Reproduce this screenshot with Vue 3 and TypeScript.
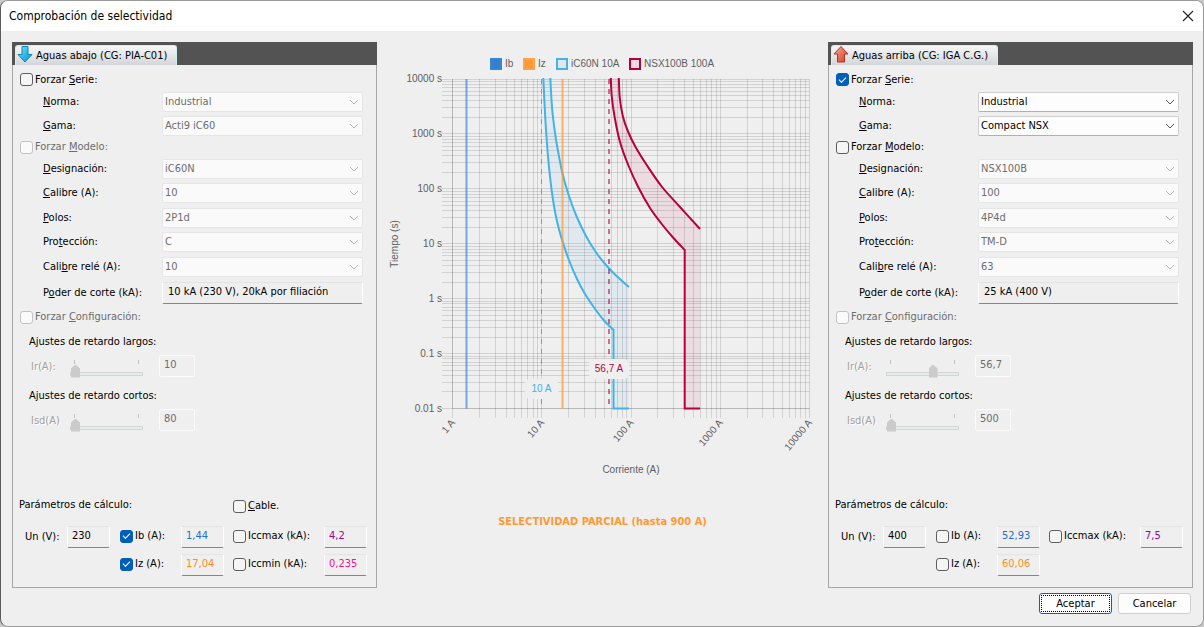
<script setup lang="ts">
interface Field {
  id: string
  pre: string
  key: string
  post: string
  value: string
}
interface Check {
  pre: string
  key: string
  post: string
  checked: boolean
  disabled: boolean
}
interface Setting {
  title: string
  label: string
  value: string
  pos: number
}
interface Param {
  label: string
  checked: boolean
  value: string
  tone: string
}
interface Device {
  id: string
  title: string
  arrow: 'down' | 'up'
  seriesOpen: boolean
  serie: Check
  modelo: Check
  config: Check
  seriesFields: Field[]
  modelFields: Field[]
  poder: string
  settings: Setting[]
  un: string
  cable: boolean
  params: Param[][]
}

const seriesFields = (norma: string, gama: string): Field[] => [
  { id: 'norma', pre: '', key: 'N', post: 'orma:', value: norma },
  { id: 'gama', pre: '', key: 'G', post: 'ama:', value: gama },
]
const modelFields = (v: string[]): Field[] => [
  { id: 'designacion', pre: '', key: 'D', post: 'esignación:', value: v[0] },
  { id: 'calibre', pre: '', key: 'C', post: 'alibre (A):', value: v[1] },
  { id: 'polos', pre: '', key: 'P', post: 'olos:', value: v[2] },
  { id: 'proteccion', pre: 'Pro', key: 't', post: 'ección:', value: v[3] },
  { id: 'rele', pre: 'Cali', key: 'b', post: 're relé (A):', value: v[4] },
]
const check = (key: string, post: string, checked: boolean, disabled: boolean): Check => ({
  pre: 'Forzar ',
  key,
  post,
  checked,
  disabled,
})

const devices: Device[] = [
  {
    id: 'abajo',
    title: 'Aguas abajo (CG: PIA-C01)',
    arrow: 'down',
    seriesOpen: false,
    serie: check('S', 'erie:', false, false),
    modelo: check('M', 'odelo:', false, true),
    config: check('C', 'onfiguración:', false, true),
    seriesFields: seriesFields('Industrial', 'Acti9 iC60'),
    modelFields: modelFields(['iC60N', '10', '2P1d', 'C', '10']),
    poder: '10 kA (230 V), 20kA por filiación',
    settings: [
      { title: 'Ajustes de retardo largos:', label: 'Ir(A):', value: '10', pos: 0 },
      { title: 'Ajustes de retardo cortos:', label: 'Isd(A)', value: '80', pos: 0 },
    ],
    un: '230',
    cable: true,
    params: [
      [
        { label: 'Ib (A):', checked: true, value: '1,44', tone: 'blue' },
        { label: 'Iccmax (kA):', checked: false, value: '4,2', tone: 'purple' },
      ],
      [
        { label: 'Iz (A):', checked: true, value: '17,04', tone: 'orange' },
        { label: 'Iccmin (kA):', checked: false, value: '0,235', tone: 'pink' },
      ],
    ],
  },
  {
    id: 'arriba',
    title: 'Aguas arriba (CG: IGA C.G.)',
    arrow: 'up',
    seriesOpen: true,
    serie: check('S', 'erie:', true, false),
    modelo: check('M', 'odelo:', false, false),
    config: check('C', 'onfiguración:', false, true),
    seriesFields: seriesFields('Industrial', 'Compact NSX'),
    modelFields: modelFields(['NSX100B', '100', '4P4d', 'TM-D', '63']),
    poder: '25 kA (400 V)',
    settings: [
      { title: 'Ajustes de retardo largos:', label: 'Ir(A):', value: '56,7', pos: 67 },
      { title: 'Ajustes de retardo cortos:', label: 'Isd(A)', value: '500', pos: 0 },
    ],
    un: '400',
    cable: false,
    params: [
      [
        { label: 'Ib (A):', checked: false, value: '52,93', tone: 'blue' },
        { label: 'Iccmax (kA):', checked: false, value: '7,5', tone: 'purple' },
      ],
      [{ label: 'Iz (A):', checked: false, value: '60,06', tone: 'orange' }],
    ],
  },
]

// Chart geometry, in viewBox units
const x0 = 75.5
const x1 = 432.5
const y0 = 37
const y1 = 366.5
const decadeX = (x1 - x0) / 4
const decadeY = (y1 - y0) / 6
const logSteps = (decades: number): number[] => {
  const out: number[] = []
  for (let d = 0; d < decades; d++) {
    for (let m = 1; m <= 9; m++) out.push(d + Math.log10(m))
  }
  out.push(decades)
  return out
}
const snap = (v: number): number => Math.floor(v) + 0.5
const gridX = logSteps(4).map((s) => snap(x0 + s * decadeX))
const gridY = logSteps(6).map((s) => snap(y1 - s * decadeY))
const xLabels = ['1 A', '10 A', '100 A', '1000 A', '10000 A'].map((text, i) => ({
  text,
  x: x0 + i * decadeX,
}))
const yLabels = ['10000 s', '1000 s', '100 s', '10 s', '1 s', '0.1 s', '0.01 s'].map((text, i) => ({
  text,
  y: y0 + i * decadeY,
}))

type Pt = [number, number]
const smooth = (p: Pt[]): string => {
  let d = ''
  for (let i = 0; i < p.length - 1; i++) {
    const a = p[Math.max(i - 1, 0)]
    const b = p[i]
    const c = p[i + 1]
    const e = p[Math.min(i + 2, p.length - 1)]
    d += `C${b[0] + (c[0] - a[0]) / 6} ${b[1] + (c[1] - a[1]) / 6} ${c[0] - (e[0] - b[0]) / 6} ${c[1] - (e[1] - b[1]) / 6} ${c[0]} ${c[1]}`
  }
  return d
}
const band = (low: Pt[], high: Pt[], right: number) => {
  const back = [...high].reverse()
  const lowPath = `M${low[0].join(' ')}${smooth(low)}V${y1}H${right}`
  return {
    fill: `${lowPath}V${back[0][1]}${smooth(back)}Z`,
    low: lowPath,
    high: `M${high[0].join(' ')}${smooth(high)}`,
  }
}
const ic60 = band(
  [[166.3, 36], [168, 71], [169.7, 98], [172, 125], [175.3, 153], [179.7, 178], [185.7, 200], [192.3, 219], [200, 237], [208, 252], [217, 265.5], [227, 278.5], [236.5, 288]],
  [[173.3, 36], [175, 65], [177.6, 88], [180.8, 108], [185.4, 131], [191.3, 152], [199.6, 174.5], [209.4, 194.7], [219.5, 211], [229, 223], [238.5, 233], [252, 245]],
  252,
)
const nsx = band(
  [[233.8, 36], [234.8, 55], [237.8, 76], [243, 100], [251.2, 123], [261.2, 145], [273, 166], [284.7, 182], [296, 195.500], [307.7, 208]],
  [[241.8, 36], [242.8, 56], [245.8, 74], [250.4, 88], [258, 104], [269.7, 123], [284.7, 144.5], [303, 165], [323, 187]],
  323,
)
const legend = [
  { text: 'Ib', x: 113, fill: '#3080d0', stroke: '#3a84d4' },
  { text: 'Iz', x: 146, fill: '#ff9933', stroke: '#fda251' },
  { text: 'iC60N 10A', x: 179, fill: '#dfe8ef', stroke: '#41b3e6' },
  { text: 'NSX100B 100A', x: 252, fill: '#ecdce2', stroke: '#b6003f' },
]
</script>

<template>
  <div class="dialog">
    <header class="titlebar">
      <h1>Comprobación de selectividad</h1>
      <button class="close" type="button" aria-label="Cerrar">
        <svg viewBox="0 0 12 12" width="12" height="12"><path d="M1 1 11 11M11 1 1 11" fill="none" stroke="#222" stroke-width="1.1" /></svg>
      </button>
    </header>

    <main class="content">
      <section v-for="d in devices" :key="d.id" class="panel" :class="d.id">
        <div class="tabs">
          <button class="tab" type="button">
            <svg v-if="d.arrow === 'down'" class="arrow" viewBox="0 0 16 18" width="16" height="18">
              <defs>
                <linearGradient id="gdown" x1="0" x2="1" y1="0" y2="1"><stop offset="0" stop-color="#8be4fb" /><stop offset="0.55" stop-color="#29b4e6" /><stop offset="1" stop-color="#1596cf" /></linearGradient>
              </defs>
              <path d="M5 0.500H11V8.500H15L8 16L1 8.500H5Z" fill="url(#gdown)" stroke="#1583b4" stroke-linejoin="round" />
            </svg>
            <svg v-else class="arrow" viewBox="0 0 16 18" width="16" height="18">
              <defs>
                <linearGradient id="gup" x1="0" x2="1" y1="0" y2="1"><stop offset="0" stop-color="#f8b8a4" /><stop offset="0.5" stop-color="#e4705c" /><stop offset="1" stop-color="#d4452f" /></linearGradient>
              </defs>
              <path d="M8 0.500L15 8H11.500V16H4.500V8H1Z" fill="url(#gup)" stroke="#b43220" stroke-linejoin="round" />
            </svg>
            <span>{{ d.title }}</span>
          </button>
        </div>

        <div class="body">
          <label class="check first" :class="{ off: d.serie.disabled }">
            <input type="checkbox" :checked="d.serie.checked" :disabled="d.serie.disabled" />
            <span>{{ d.serie.pre }}<u>{{ d.serie.key }}</u>{{ d.serie.post }}</span>
          </label>
          <div class="fields series">
            <template v-for="f in d.seriesFields" :key="f.id">
              <label :for="d.id + f.id">{{ f.pre }}<u>{{ f.key }}</u>{{ f.post }}</label>
              <div class="combo">
                <select :id="d.id + f.id" :disabled="!d.seriesOpen"><option>{{ f.value }}</option></select>
                <svg viewBox="0 0 10 6" width="10" height="6"><path d="M1 1 5 5 9 1" fill="none" stroke="currentColor" /></svg>
              </div>
            </template>
          </div>
          <label class="check" :class="{ off: d.modelo.disabled }">
            <input type="checkbox" :checked="d.modelo.checked" :disabled="d.modelo.disabled" />
            <span>{{ d.modelo.pre }}<u>{{ d.modelo.key }}</u>{{ d.modelo.post }}</span>
          </label>
          <div class="fields model">
            <template v-for="f in d.modelFields" :key="f.id">
              <label :for="d.id + f.id">{{ f.pre }}<u>{{ f.key }}</u>{{ f.post }}</label>
              <div class="combo">
                <select :id="d.id + f.id" disabled><option>{{ f.value }}</option></select>
                <svg viewBox="0 0 10 6" width="10" height="6"><path d="M1 1 5 5 9 1" fill="none" stroke="currentColor" /></svg>
              </div>
            </template>
            <label :for="d.id + 'poder'">P<u>o</u>der de corte (kA):</label>
            <input :id="d.id + 'poder'" class="box" type="text" :value="d.poder" readonly />
          </div>
          <label class="check config" :class="{ off: d.config.disabled }">
            <input type="checkbox" :checked="d.config.checked" :disabled="d.config.disabled" />
            <span>{{ d.config.pre }}<u>{{ d.config.key }}</u>{{ d.config.post }}</span>
          </label>

          <div class="settings">
            <div v-for="s in d.settings" :key="s.label" class="setting">
              <h2>{{ s.title }}</h2>
              <div class="setting-row">
                <label :for="d.id + s.label">{{ s.label }}</label>
                <div class="slider">
                  <div class="ticks"><i></i><i></i></div>
                  <input :id="d.id + s.label" type="range" min="0" max="100" :value="s.pos" disabled />
                </div>
                <input class="box dim" type="text" :value="s.value" :aria-label="s.title" disabled />
              </div>
            </div>
          </div>

          <div class="params">
            <h2>Parámetros de cálculo:</h2>
            <label v-if="d.cable" class="check cable">
              <input type="checkbox" />
              <span><u>C</u>able.</span>
            </label>
            <label class="un" :for="d.id + 'un'">Un (V):</label>
            <input :id="d.id + 'un'" class="box un-box" type="text" :value="d.un" readonly />
            <template v-for="(row, r) in d.params" :key="r">
              <template v-for="(p, c) in row" :key="p.label">
                <label class="check" :class="'c' + c">
                  <input type="checkbox" :checked="p.checked" />
                  <span>{{ p.label }}</span>
                </label>
                <input class="box" :class="p.tone" type="text" :value="p.value" :aria-label="p.label" readonly />
              </template>
            </template>
          </div>
        </div>
      </section>

      <section class="chart">
        <svg viewBox="0 0 451 440" role="img" aria-label="Curvas de disparo">
          <g stroke="#000" stroke-opacity="0.12">
            <line v-for="(x, i) in gridX" :key="'x' + i" :x1="x" :x2="x" :y1="y0" y2="376" />
            <line v-for="(y, i) in gridY" :key="'y' + i" x1="65" :x2="x1" :y1="y" :y2="y" />
          </g>
          <path :d="`M75.500 ${y0}V${y1}H${x1}`" fill="none" stroke="#000" stroke-opacity="0.12" />
          <g fill="none" stroke-width="2">
            <path :d="nsx.fill" fill="#b6003f" fill-opacity="0.08" />
            <path :d="ic60.fill" fill="#41a0e6" fill-opacity="0.08" />
            <path :d="`M89.500 ${y0}V${y1}`" stroke="#3080d8" stroke-opacity="0.65" />
            <path :d="nsx.low" stroke="#b6003f" />
            <path :d="nsx.high" stroke="#b6003f" />
            <path :d="ic60.low" stroke="#41b3e6" />
            <path :d="ic60.high" stroke="#41b3e6" />
            <path :d="`M185.500 ${y0}V${y1}`" stroke="#ff9933" stroke-opacity="0.7" />
            <path :d="`M164.500 ${y0}V${y1}`" stroke="#41b3e6" stroke-width="1" stroke-dasharray="5 5" />
            <path :d="`M232 ${y0}V${y1}`" stroke="#b6003f" stroke-opacity="0.55" stroke-dasharray="5 5" />
          </g>
          <rect x="148" y="337" width="33" height="20" rx="5" fill="#efefef" />
          <rect x="212" y="317" width="40" height="20" rx="5" fill="#efefef" />
          <g class="ticktext">
            <text x="164.500" y="350" text-anchor="middle" fill="#41b3e6">10 A</text>
            <text x="232" y="330" text-anchor="middle" fill="#b6003f">56,7 A</text>
            <g v-for="l in legend" :key="l.text">
              <rect :x="l.x + 1" y="17" width="10" height="10" :fill="l.fill" :stroke="l.stroke" stroke-width="2" />
              <text :x="l.x + 15" y="25">{{ l.text }}</text>
            </g>
            <text v-for="l in yLabels" :key="l.text" x="65" :y="l.y + 3" text-anchor="end">{{ l.text }}</text>
            <text v-for="l in xLabels" :key="l.text" :transform="`translate(${l.x + 3} 381) rotate(-50)`" text-anchor="end">{{ l.text }}</text>
            <text transform="translate(21 202) rotate(-90)" text-anchor="middle">Tiempo (s)</text>
            <text x="254" y="431" text-anchor="middle">Corriente (A)</text>
          </g>
        </svg>
        <p class="verdict">SELECTIVIDAD PARCIAL (hasta 900 A)</p>
      </section>
    </main>

    <footer class="actions">
      <button class="primary" type="button">Aceptar</button>
      <button type="button">Cancelar</button>
    </footer>
  </div>
</template>

<style>
body {
  margin: 0;
  background: #c8c8c8;
}
</style>

<style scoped>
* {
  box-sizing: border-box;
}
.dialog {
  display: flex;
  flex-direction: column;
  min-height: 100vh;
  overflow: hidden;
  border: 1px solid #9a9a9a;
  border-left-color: #5c5c5c;
  border-radius: 8px;
  background: #efefef;
  color: #000;
  font: 11px/16px "DejaVu Sans Condensed", "DejaVu Sans", sans-serif;
}
button,
input,
select {
  margin: 0;
  font: inherit;
  color: inherit;
}
h1,
h2,
p {
  margin: 0;
  font: inherit;
}
.titlebar {
  display: flex;
  align-items: center;
  justify-content: space-between;
  height: 30px;
  padding: 0 9px 0 8px;
  background: #fff;
}
.titlebar h1 {
  font-size: 12px;
}
.close {
  display: flex;
  padding: 0;
  border: 0;
  background: none;
}
.content {
  flex: 1;
  display: grid;
  grid-template-columns: 365px minmax(0, 1fr) 365px;
  padding: 11px 10px 0 11px;
}
.panel {
  display: flex;
  flex-direction: column;
  grid-row: 1;
}
.abajo {
  grid-column: 1;
}
.arriba {
  grid-column: 3;
}
.chart {
  grid-column: 2;
  grid-row: 1;
}
.chart svg {
  display: block;
  width: 100%;
}
.ticktext {
  font: 10px "Liberation Sans", Arial, sans-serif;
  fill: #606060;
}
.verdict {
  margin-top: 32px;
  text-align: center;
  font-weight: bold;
  color: #ff9933;
}
.tabs {
  display: flex;
  height: 23px;
  padding: 3px 3px 0;
  background: #535353;
}
.tab {
  display: flex;
  align-items: center;
  gap: 3px;
  height: 20px;
  padding: 0 9px 0 1px;
  border: 1px solid #cdeef2;
  border-bottom: 0;
  border-radius: 3px 3px 0 0;
  background: linear-gradient(#f6f6f6, #d3d6da);
  white-space: nowrap;
}
.arrow {
  align-self: flex-start;
}
.body {
  flex: 1;
  display: flex;
  flex-direction: column;
  padding: 4px 9px 11px 6px;
  border: 1px solid #a6a6a6;
  border-top: 0;
}
.check {
  display: flex;
  align-items: center;
  gap: 2px;
  height: 18px;
  padding-left: 1px;
  white-space: nowrap;
}
.first {
  height: 21px;
}
.config {
  height: 22px;
}
.off {
  color: #6d6d6d;
}
.check input {
  flex: none;
  display: grid;
  place-items: center;
  width: 13px;
  height: 13px;
  appearance: none;
  border: 1px solid #5f5f5f;
  border-radius: 3px;
  background: #f5f5f5;
}
.check input:disabled {
  border-color: #c3c3c3;
  background: #fafafa;
}
.check input:checked {
  border-color: #005fb8;
  background: #005fb8;
}
.check input:checked::after {
  content: "";
  width: 6px;
  height: 3px;
  margin-bottom: 2px;
  border: solid #fff;
  border-width: 0 0 1px 1px;
  transform: rotate(-45deg);
}
.fields {
  display: grid;
  grid-template-columns: 119px 201px;
  align-items: center;
  padding-left: 24px;
}
.series {
  grid-template-rows: 24px 24px;
}
.model {
  grid-template-rows: 25px 24px 25px 24px 25px 27px;
}
.combo {
  position: relative;
  display: flex;
}
.combo svg {
  position: absolute;
  right: 4px;
  top: 7px;
  color: #555;
  pointer-events: none;
}
select:disabled + svg {
  color: #b8b8b8;
}
select {
  width: 100%;
  height: 20px;
  padding: 0 2px;
  appearance: none;
  border: 1px solid #cfcfcf;
  border-bottom-color: #b0b0b0;
  border-radius: 2px;
  background: #fdfdfd;
}
select:disabled {
  border-color: #e6e6e6;
  background: #fafafa;
  color: #6d6d6d;
  opacity: 1;
}
.box {
  width: 43px;
  min-width: 0;
  height: 22px;
  padding: 0 4px 3px;
  border: 1px solid #fff;
  border-top-color: #e4e4e4;
  border-bottom-color: #858585;
  border-radius: 2px;
  background: #efefef;
}
.model .box {
  width: 201px;
  padding-left: 5px;
}
.box.dim {
  width: 36px;
  border: 1px solid #fbfbfb;
  color: #6d6d6d;
}
.settings {
  display: flex;
  flex-direction: column;
  gap: 10px;
  padding: 5px 0 0 10px;
}
.setting h2 {
  height: 18px;
  line-height: 18px;
}
.setting-row {
  display: flex;
  align-items: center;
  margin-top: 3px;
  height: 23px;
}
.setting-row label {
  width: 41px;
  padding: 2px 0 0 2px;
  color: #a0a0a0;
  text-shadow: 1px 1px #fff;
}
.slider {
  width: 73px;
  margin-right: 16px;
  padding-top: 6px;
}
.ticks {
  display: flex;
  justify-content: space-between;
  padding: 0 4px;
}
.ticks i {
  width: 1px;
  height: 4px;
  background: #c0c0c0;
}
input[type="range"] {
  display: block;
  width: 100%;
  height: 14px;
  appearance: none;
  background: none;
}
input[type="range"]::-webkit-slider-runnable-track {
  height: 4px;
  margin-top: 6px;
  border: 1px solid #d2d6d6;
  background: #e7eaea;
}
input[type="range"]::-webkit-slider-thumb {
  width: 9px;
  height: 13px;
  margin-top: -8px;
  appearance: none;
  border-radius: 0;
  background: #cbcbcb;
  clip-path: polygon(50% 0, 100% 30%, 100% 100%, 0 100%, 0 30%);
}
.params {
  display: grid;
  grid-template-columns: 42px 43px 71px 43px 100px 43px;
  grid-template-rows: 24px 22px 22px;
  align-items: center;
  row-gap: 6px;
  margin-top: auto;
  padding-left: 6px;
}
.params h2 {
  grid-column: 1 / 5;
  margin: 0 0 6px -6px;
}
.params .check {
  align-self: start;
  height: 20px;
  padding-left: 9px;
}
.params .cable {
  grid-column: 5 / 7;
}
.params .un {
  grid-column: 1;
  grid-row: 2;
}
.params .un-box {
  grid-column: 2;
  grid-row: 2;
}
.params .c0 {
  grid-column: 3;
  padding-left: 10px;
}
.blue {
  color: #1e6fd0;
}
.orange {
  color: #ff8c1a;
}
.purple {
  color: #a000a0;
}
.pink {
  color: #f0148c;
}
.actions {
  display: flex;
  justify-content: flex-end;
  gap: 6px;
  padding: 5px 12px 12px;
}
.actions button {
  width: 73px;
  height: 21px;
  padding: 0;
  border: 1px solid #cfcfcf;
  border-radius: 3px;
  background: #fdfdfd;
}
.actions .primary {
  border-color: #0067c0;
  outline: 1px dotted #000;
  outline-offset: -3px;
}
</style>
